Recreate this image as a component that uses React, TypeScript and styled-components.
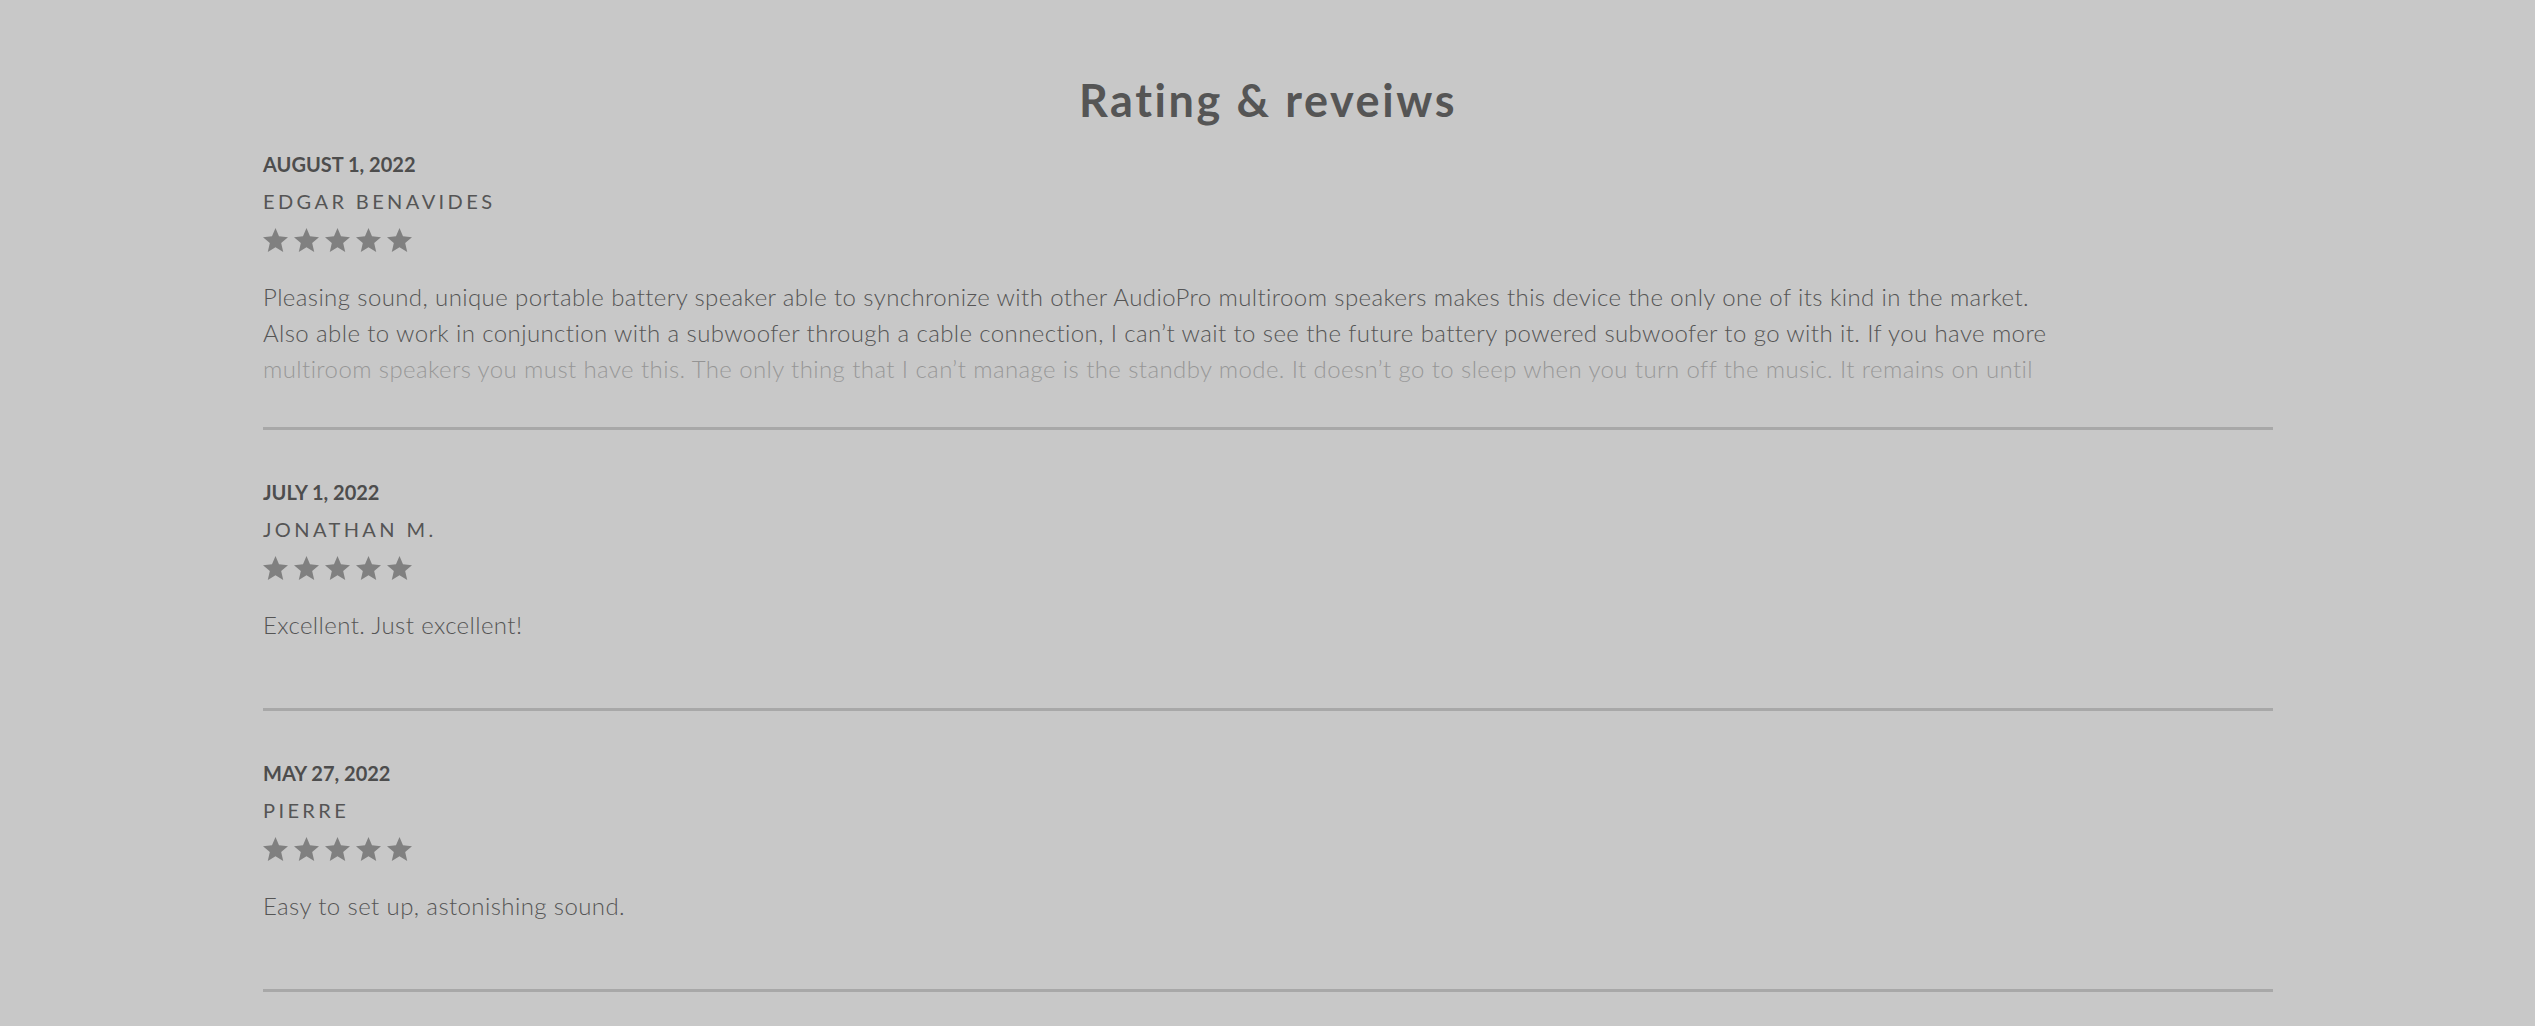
import React from "react";
import styled, { createGlobalStyle } from "styled-components";

interface Review {
  date: string;
  author: string;
  rating: number;
  text: string;
  clamped?: boolean;
}

const reviews: Review[] = [
  {
    date: "August 1, 2022",
    author: "Edgar Benavides",
    rating: 5,
    clamped: true,
    text:
      "Pleasing sound, unique portable battery speaker able to synchronize with other AudioPro multiroom speakers makes this device the only one of its kind in the market.\nAlso able to work in conjunction with a subwoofer through a cable connection, I can\u2019t wait to see the future battery powered subwoofer to go with it. If you have more multiroom speakers you must have this. The only thing that I can\u2019t manage is the standby mode. It doesn\u2019t go to sleep when you turn off the music. It remains on until the battery runs out, so remember to switch it off by hand.",
  },
  {
    date: "July 1, 2022",
    author: "Jonathan M.",
    rating: 5,
    text: "Excellent. Just excellent!",
  },
  {
    date: "May 27, 2022",
    author: "Pierre",
    rating: 5,
    text: "Easy to set up, astonishing sound.",
  },
];

const GlobalStyle = createGlobalStyle`
  html, body {
    margin: 0;
    padding: 0;
    background: #c8c8c8;
  }
  body {
    font-family: "Lato", "Liberation Sans", sans-serif;
    -webkit-font-smoothing: antialiased;
  }
`;

const Page = styled.main`
  padding: 73px 262px 0 263px;
  min-height: 1026px;
  box-sizing: border-box;
`;

const Title = styled.h2`
  margin: 0 0 25px;
  text-align: center;
  font-size: 45px;
  line-height: 54px;
  font-weight: 700;
  color: #555555;
  letter-spacing: 2.6px;
`;

const List = styled.section`
  display: flex;
  flex-direction: column;
`;

const Item = styled.article<{ $first?: boolean }>`
  display: flex;
  flex-direction: column;
  padding: ${(p) => (p.$first ? "0" : "50px")} 0 32px;
  border-bottom: 3px solid #a8a8a8;
`;

const DateLine = styled.div`
  font-size: 20px;
  line-height: 24px;
  font-weight: 700;
  color: #4d4d4d;
  text-transform: uppercase;
`;

const Author = styled.div`
  margin-top: 13px;
  font-size: 20px;
  line-height: 24px;
  font-weight: 400;
  color: #555555;
  text-transform: uppercase;
  letter-spacing: 3.4px;
`;

const Stars = styled.div`
  margin-top: 15px;
  display: flex;
  gap: 6px;
  height: 24px;
`;

const Body = styled.p<{ $clamped?: boolean }>`
  position: relative;
  margin: 27px 0 0;
  max-width: 90%;
  font-size: 24px;
  line-height: 36px;
  font-weight: 300;
  letter-spacing: 0.4px;
  color: #555555;
  white-space: pre-line;
  min-height: 69px;
  ${(p) =>
    p.$clamped &&
    `
    max-height: 116px;
    overflow: hidden;
    &::after {
      content: "";
      position: absolute;
      left: 0;
      right: 0;
      bottom: 0;
      height: 48px;
      background: linear-gradient(rgba(200,200,200,0.5), rgba(200,200,200,0.65));
    }
  `}
`;

const Star = () => (
  <svg width="25" height="24" viewBox="2 2 20 19" preserveAspectRatio="none">
    <path
      fill="#808080"
      d="M12 17.27L18.18 21l-1.64-7.03L22 9.24l-7.19-.61L12 2 9.19 8.63 2 9.24l5.46 4.73L5.82 21z"
    />
  </svg>
);

const ReviewItem: React.FC<{ review: Review; first?: boolean }> = ({
  review,
  first,
}) => (
  <Item $first={first}>
    <DateLine>{review.date}</DateLine>
    <Author>{review.author}</Author>
    <Stars>
      {Array.from({ length: review.rating }).map((_, i) => (
        <Star key={i} />
      ))}
    </Stars>
    <Body $clamped={review.clamped}>{review.text}</Body>
  </Item>
);

export default function App() {
  return (
    <>
      <GlobalStyle />
      <Page>
        <Title>Rating &amp; reveiws</Title>
        <List>
          {reviews.map((r, i) => (
            <ReviewItem key={r.author} review={r} first={i === 0} />
          ))}
        </List>
      </Page>
    </>
  );
}
